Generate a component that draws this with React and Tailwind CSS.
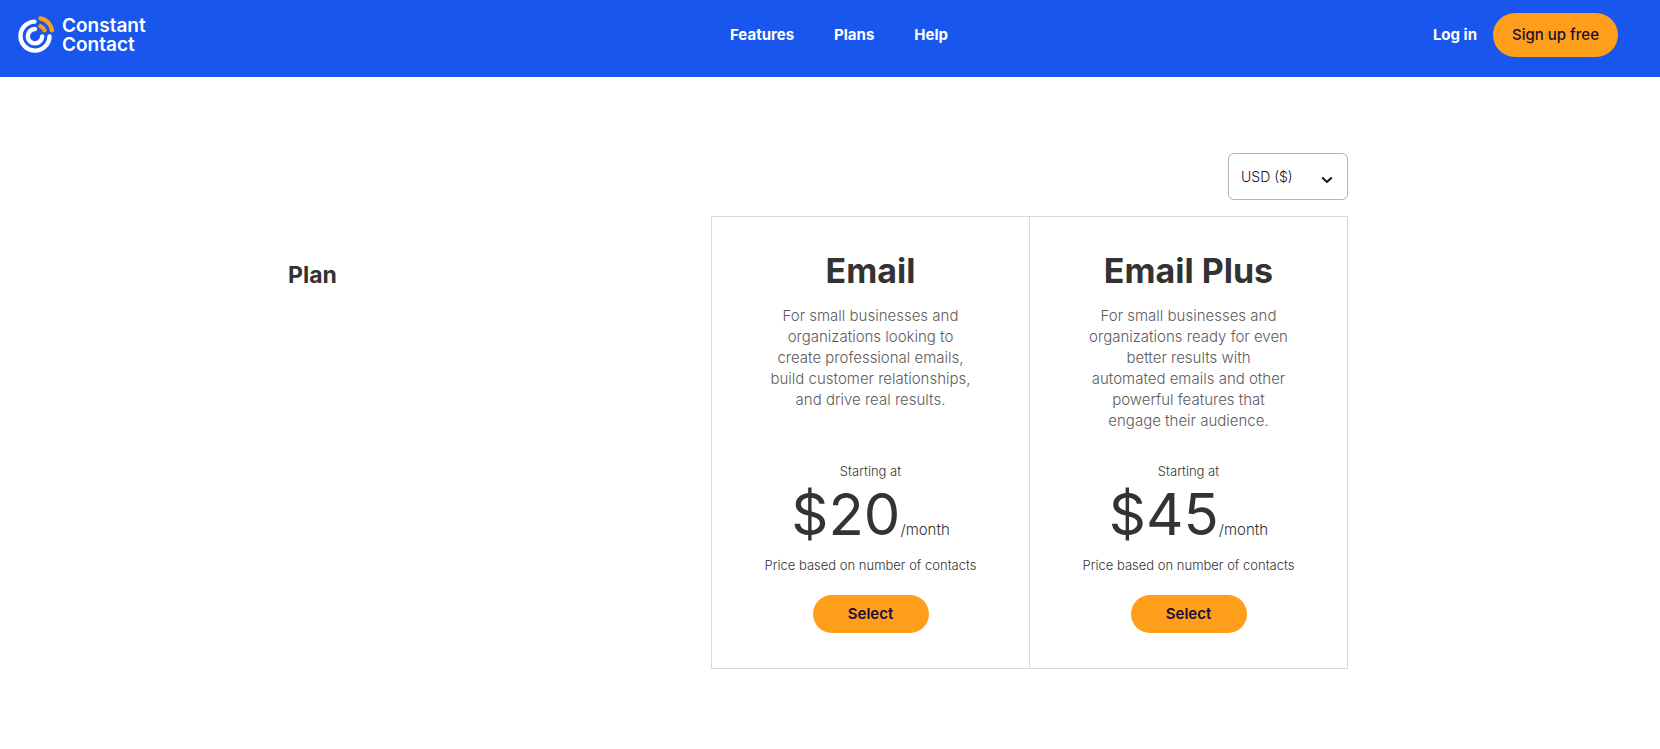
const navLinks = ["Features", "Plans", "Help"];

const plans = [
  {
    name: "Email",
    price: "$20",
    description: [
      "For small businesses and",
      "organizations looking to",
      "create professional emails,",
      "build customer relationships,",
      "and drive real results.",
    ],
  },
  {
    name: "Email Plus",
    price: "$45",
    description: [
      "For small businesses and",
      "organizations ready for even",
      "better results with",
      "automated emails and other",
      "powerful features that",
      "engage their audience.",
    ],
  },
];

function Logo() {
  return (
    <a href="#home" aria-label="Constant Contact" className="flex items-center gap-[7px] text-white">
      <svg viewBox="0 0 37 38" className="h-[38px] w-[37px]" fill="none" strokeWidth="4.4" strokeLinecap="round">
        <g stroke="#fff">
          <path d="M16.500 5.600A14.500 14.500 0 1 0 31.500 20.500" />
          <path d="M17 13A7.200 7.200 0 1 0 24.200 20.500" />
        </g>
        <g stroke="#ff9e1a">
          <path d="M22.500 2.400A14 14 0 0 1 34 14.200" />
          <path d="M22.500 10.300A7 7 0 0 1 26.500 14.300" />
        </g>
      </svg>
      <span className="flex flex-col text-[19px] leading-[19px] font-semibold">
        <span>Constant</span>
        <span>Contact</span>
      </span>
    </a>
  );
}

function Header() {
  return (
    <header className="grid grid-cols-[1fr_auto_1fr] items-center bg-[#1856ed] pt-[13px] pr-[42px] pb-5 pl-[18px]">
      <div className="flex items-center">
        <Logo />
      </div>
      <nav className="flex items-center gap-10 pl-[42px] text-[15px] font-bold text-white">
        {navLinks.map((label) => (
          <a key={label} href={"#" + label.toLowerCase()}>{label}</a>
        ))}
      </nav>
      <div className="flex items-center justify-end gap-4">
        <a href="#login" className="text-[15px] font-bold text-white">Log in</a>
        <a href="#signup" className="flex h-11 w-[125px] items-center justify-center rounded-full bg-[#ff9e1a] text-[15px] font-medium text-[#1b1033]">
          Sign up free
        </a>
      </div>
    </header>
  );
}

function CurrencySelect() {
  return (
    <div className="relative w-[120px]">
      <select
        aria-label="Currency"
        className="h-[47px] w-full appearance-none rounded-md border border-[#b4b4b8] bg-white pl-3 text-sm font-light text-[#1b1033]"
      >
        <option>USD ($)</option>
      </select>
      <svg viewBox="0 0 12 8" className="pointer-events-none absolute top-[23px] right-[15px] h-2 w-3" fill="none" stroke="#111" strokeWidth="2">
        <path d="M1.200 1.500 6 6l4.800-4.500" />
      </svg>
    </div>
  );
}

function PlanCard({ plan }) {
  return (
    <article className="flex w-[319px] flex-col items-center border border-[#d9d9d9] pt-8 pb-[35px] text-center text-[#333]">
      <h2 className="text-[34px] leading-[44px] font-bold">{plan.name}</h2>
      <p className="mt-3 min-h-[126px] text-[15px] leading-[21px] font-light text-[#5c5c5c]">
        {plan.description.map((line) => (
          <span key={line} className="block">{line}</span>
        ))}
      </p>
      <p className="mt-[30px] text-[13px] leading-5 font-light">Starting at</p>
      <p className="flex h-[66px] items-baseline text-[15px] font-light">
        <span className="text-[58px] leading-[66px] font-normal">{plan.price}</span>
        <span>/month</span>
      </p>
      <p className="mt-2 text-[13px] leading-5 font-light">Price based on number of contacts</p>
      <button className="mt-5 h-[38px] w-[116px] rounded-full bg-[#ff9e1a] text-[15px] font-semibold text-[#1b1033]">
        Select
      </button>
    </article>
  );
}

export default function App() {
  return (
    <div className="min-h-screen bg-white font-['Inter',sans-serif]">
      <Header />
      <main className="pt-[76px] pr-6">
        <div className="mx-auto max-w-[1060px]">
          <div className="flex justify-end">
            <CurrencySelect />
          </div>
          <section className="mt-4 flex items-stretch">
            <h1 className="flex-1 pt-11 text-[23px] leading-[30px] font-bold text-[#333]">Plan</h1>
            <div className="flex -space-x-px">
              {plans.map((plan) => (
                <PlanCard key={plan.name} plan={plan} />
              ))}
            </div>
          </section>
        </div>
      </main>
    </div>
  );
}
